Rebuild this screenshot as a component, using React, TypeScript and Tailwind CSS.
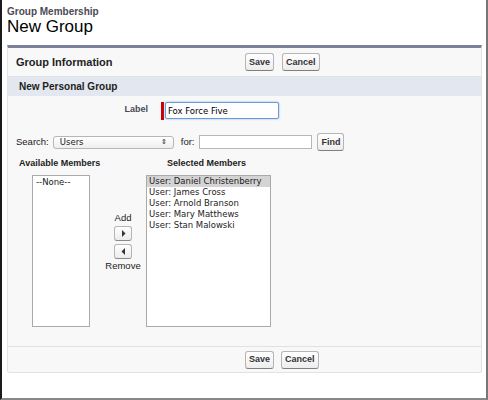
import React from "react";

const Btn = ({ children }: { children: React.ReactNode }) => (
  <button className="h-[18px] px-[3px] rounded-[3px] border border-[#b5b5b5] border-b-[#7f7f7f] bg-gradient-to-b from-white to-[#ededed] text-[9px] font-bold text-[#333] leading-none">
    {children}
  </button>
);

const ArrowBtn = ({ dir }: { dir: "r" | "l" }) => (
  <button className="w-[18px] h-[15px] rounded-[3px] border border-[#b5b5b5] border-b-[#8a8a8a] bg-gradient-to-b from-white to-[#ececec] flex items-center justify-center">
    <svg width="5" height="7" viewBox="0 0 5 7">
      {dir === "r" ? <polygon points="1,0 4.5,3.5 1,7" fill="#333" /> : <polygon points="4,0 0.5,3.5 4,7" fill="#333" />}
    </svg>
  </button>
);

export default function App() {
  const members = [
    "User: Daniel Christenberry",
    "User: James Cross",
    "User: Arnold Branson",
    "User: Mary Matthews",
    "User: Stan Malowski",
  ];
  return (
    <div
      className="w-[488px] h-[400px] bg-white border-l-2 border-l-[#1a1a1a] border-r-2 border-r-[#777] border-b-2 border-b-[#888] flex flex-col overflow-hidden"
      style={{ fontFamily: '"Liberation Sans", Arial, sans-serif' }}
    >
      <div className="pl-[5px] pt-[6px] h-[45px]">
        <div className="text-[10px] font-bold text-[#4a4a56] leading-[11px]">Group Membership</div>
        <div className="text-[17px] text-black leading-[19px]">New Group</div>
      </div>
      <div className="ml-[5px] mr-[4px] border-t-[3px] border-t-[#7a8196] border-x border-b border-[#e0e3e5] bg-[#f8f8f8] rounded-b-[3px] flex flex-col h-[328px]">
        <div className="h-[29px] shrink-0 flex items-center border-b border-[#dfe2e4]">
          <div className="w-[237px] pl-[8px] text-[11px] font-bold text-[#222]">Group Information</div>
          <div className="flex gap-[8px]">
            <Btn>Save</Btn>
            <Btn>Cancel</Btn>
          </div>
        </div>
        <div className="h-[19px] shrink-0 bg-[#e3e7ef] pl-[11px] flex items-center text-[10px] font-bold text-[#222]">
          New Personal Group
        </div>
        <div className="flex h-[19px] mt-[6px] shrink-0">
          <div className="w-[153px] text-right pr-[13px] text-[9px] font-bold text-[#4a4a56] leading-[12px] pt-[1px]">Label</div>
          <div className="w-[3px] h-[18px] bg-[#c00]" />
          <input
            readOnly
            value="Fox Force Five"
            className="w-[114px] h-[17px] ml-[1px] border border-[#6b9bd6] rounded-[2px] shadow-[0_0_2px_#7aa7e0] bg-white px-[2px] text-[8.5px] text-black outline-none"
            style={{ fontFamily: '"DejaVu Sans", sans-serif' }}
          />
        </div>
        <div className="flex items-center h-[20px] mt-[11px] pl-[8px] text-[9.5px] text-[#222] shrink-0">
          <span>Search:</span>
          <div className="ml-[4px] w-[121px] h-[13px] border border-[#b6b6b6] rounded-[3px] bg-gradient-to-b from-white to-[#eee] flex items-center justify-between px-[6px] text-[8.5px]" style={{ fontFamily: '"DejaVu Sans", sans-serif' }}>
            <span>Users</span>
            <span className="text-[7px] leading-none">⇕</span>
          </div>
          <span className="ml-[7px]">for:</span>
          <div className="ml-[5px] w-[113px] h-[14px] border border-[#b6b6b6] bg-white" />
          <div className="ml-[5px]">
            <Btn>Find</Btn>
          </div>
        </div>
        <div className="flex mt-[5px] text-[9px] font-bold text-[#222] h-[14px] items-center shrink-0">
          <div className="pl-[11px] w-[159px]">Available Members</div>
          <div>Selected Members</div>
        </div>
        <div className="flex mt-[4px] shrink-0">
          <div
            className="ml-[24px] w-[58px] h-[152px] border border-[#aaa] bg-white text-[8.5px] text-[#222] pl-[3px] leading-[12px]"
            style={{ fontFamily: '"DejaVu Sans", sans-serif' }}
          >
            --None--
          </div>
          <div className="w-[56px] pl-[10px] flex flex-col items-center pt-[37px] text-[9.5px] text-[#222]">
            <span className="leading-[12px]">Add</span>
            <div className="mt-[2px]"><ArrowBtn dir="r" /></div>
            <div className="mt-[3px]"><ArrowBtn dir="l" /></div>
            <span className="leading-[12px] mt-[1px]">Remove</span>
          </div>
          <div
            className="w-[125px] h-[152px] border border-[#aaa] bg-white text-[8.5px] text-[#222]"
            style={{ fontFamily: '"DejaVu Sans", sans-serif' }}
          >
            {members.map((m, i) => (
              <div key={m} className={`pl-[2px] leading-[11px] ${i === 0 ? "bg-[#d4d4d4]" : ""}`}>
                {m}
              </div>
            ))}
          </div>
        </div>
        <div className="mt-auto h-[26px] border-t border-[#dfe2e4] flex items-center">
          <div className="ml-[237px] flex gap-[7px]">
            <Btn>Save</Btn>
            <Btn>Cancel</Btn>
          </div>
        </div>
      </div>
    </div>
  );
}
